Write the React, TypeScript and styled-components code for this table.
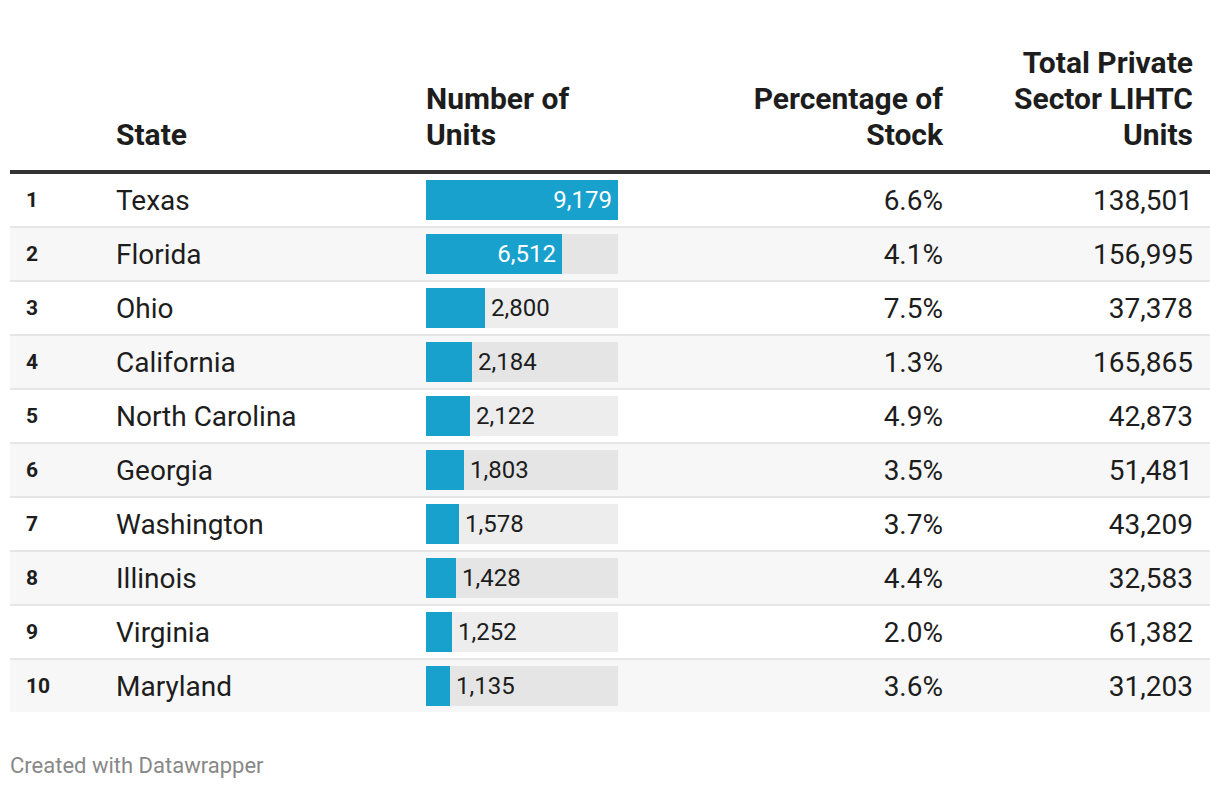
import React from 'react';
import styled, { createGlobalStyle } from 'styled-components';

const GlobalStyle = createGlobalStyle`
  html, body {
    margin: 0;
    padding: 0;
    background: #ffffff;
  }
  body {
    font-family: Roboto, "Liberation Sans", Arial, sans-serif;
    color: #1d1d1d;
  }
`;

const Page = styled.div`
  width: 1200px;
  padding: 10px 10px 0;
`;

const Grid = styled.div`
  display: grid;
  grid-template-columns: 106px 310px 192px 325px 1fr;
`;

const HeaderRow = styled(Grid)`
  border-bottom: 4px solid #333333;
  padding-top: 35px;
`;

const HeadCell = styled.div<{ align?: 'left' | 'right'; last?: boolean }>`
  display: flex;
  align-items: flex-end;
  justify-content: ${p => (p.align === 'right' ? 'flex-end' : 'flex-start')};
  text-align: ${p => p.align ?? 'left'};
  font-size: 30px;
  font-weight: 700;
  line-height: 36px;
  padding-bottom: 17px;
  padding-right: ${p => (p.last ? '17px' : '0')};
`;

const Row = styled(Grid)<{ even: boolean }>`
  height: 52px;
  align-items: center;
  background: ${p => (p.even ? '#f7f7f7' : '#ffffff')};
  border-bottom: 2px solid #e6e6e6;

  &:last-child {
    border-bottom: none;
  }
`;

const Rank = styled.div`
  font-size: 21px;
  font-weight: 700;
  padding-left: 16px;
`;

const StateName = styled.div`
  font-size: 28px;
`;

const Num = styled.div<{ last?: boolean }>`
  font-size: 28px;
  text-align: right;
  padding-right: ${p => (p.last ? '17px' : '0')};
`;

const BarTrack = styled.div`
  height: 40px;
  background: rgba(0, 0, 0, 0.07);
  display: flex;
  align-items: center;
`;

const BarFill = styled.div`
  height: 100%;
  background: #18a1cd;
  display: flex;
  align-items: center;
  justify-content: flex-end;
  flex: none;
`;

const BarLabel = styled.span<{ inside: boolean }>`
  font-size: 24px;
  color: ${p => (p.inside ? '#ffffff' : '#1d1d1d')};
  padding: ${p => (p.inside ? '0 6px 0 0' : '0 0 0 6px')};
`;

const Footer = styled.div`
  margin-top: 41px;
  font-size: 22px;
  color: #888888;
`;

type Item = { state: string; units: number; pct: string; total: string };

const data: Item[] = [
  { state: 'Texas', units: 9179, pct: '6.6%', total: '138,501' },
  { state: 'Florida', units: 6512, pct: '4.1%', total: '156,995' },
  { state: 'Ohio', units: 2800, pct: '7.5%', total: '37,378' },
  { state: 'California', units: 2184, pct: '1.3%', total: '165,865' },
  { state: 'North Carolina', units: 2122, pct: '4.9%', total: '42,873' },
  { state: 'Georgia', units: 1803, pct: '3.5%', total: '51,481' },
  { state: 'Washington', units: 1578, pct: '3.7%', total: '43,209' },
  { state: 'Illinois', units: 1428, pct: '4.4%', total: '32,583' },
  { state: 'Virginia', units: 1252, pct: '2.0%', total: '61,382' },
  { state: 'Maryland', units: 1135, pct: '3.6%', total: '31,203' },
];

const maxUnits = Math.max(...data.map(d => d.units));
const BAR_WIDTH = 192;

const UnitsBar: React.FC<{ value: number }> = ({ value }) => {
  const width = Math.round((value / maxUnits) * BAR_WIDTH);
  const inside = width > 90;
  const label = value.toLocaleString('en-US');
  return (
    <BarTrack>
      <BarFill style={{ width }}>
        {inside && <BarLabel inside>{label}</BarLabel>}
      </BarFill>
      {!inside && <BarLabel inside={false}>{label}</BarLabel>}
    </BarTrack>
  );
};

const App: React.FC = () => {
  return (
    <>
      <GlobalStyle />
      <Page>
        <HeaderRow>
          <HeadCell />
          <HeadCell>State</HeadCell>
          <HeadCell>Number of<br />Units</HeadCell>
          <HeadCell align="right">Percentage of<br />Stock</HeadCell>
          <HeadCell align="right" last>Total Private<br />Sector LIHTC<br />Units</HeadCell>
        </HeaderRow>
        <div>
          {data.map((d, i) => (
            <Row key={d.state} even={i % 2 === 1}>
              <Rank>{i + 1}</Rank>
              <StateName>{d.state}</StateName>
              <UnitsBar value={d.units} />
              <Num>{d.pct}</Num>
              <Num last>{d.total}</Num>
            </Row>
          ))}
        </div>
        <Footer>Created with Datawrapper</Footer>
      </Page>
    </>
  );
};

export default App;
